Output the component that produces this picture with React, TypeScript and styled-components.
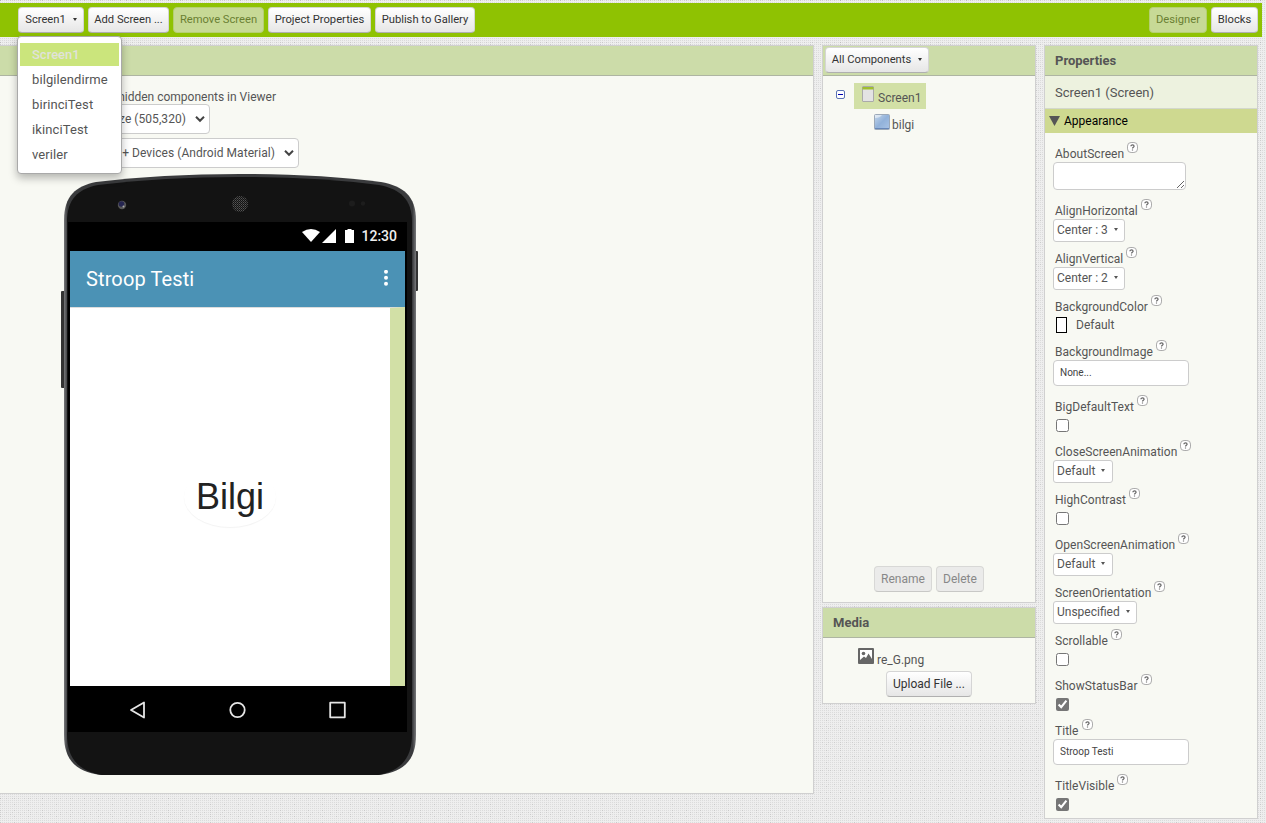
import React from 'react';
import styled, { createGlobalStyle, css } from 'styled-components';

const GlobalStyle = createGlobalStyle`
  * { box-sizing: border-box; }
  body {
    margin: 0;
    font-family: Roboto, "Liberation Sans", sans-serif;
    font-size: 12px;
    color: #555;
    overflow: hidden;
  }
`;

const dot = (alpha: number) =>
  `conic-gradient(from 270deg at 1px 1px, rgba(90, 90, 90, ${alpha}) 90deg, transparent 0)`;

const Page = styled.div`
  width: 1266px;
  height: 823px;
  padding-top: 3px;
  overflow: hidden;
  background-color: #eeeeee;
  background-image: ${dot(0.12)}, ${dot(0.14)}, ${dot(0.12)}, ${dot(0.1)};
  background-size: 2px 2px, 14px 6px, 10px 22px, 6px 14px;
`;

const Toolbar = styled.header`
  display: flex;
  gap: 4px;
  width: 1262px;
  height: 34px;
  padding: 4px 4px 0 18px;
  background: #8fc202;
`;

const Spacer = styled.div`
  flex: 1;
`;

const Button = styled.button<{ $w: number; $state?: 'current' | 'disabled'; $compact?: boolean }>`
  display: flex;
  align-items: center;
  justify-content: center;
  flex: none;
  width: ${p => p.$w}px;
  height: 26px;
  padding: 0 0 ${p => (p.$compact ? 2 : 1)}px;
  border: 1px solid #d5d5d5;
  border-bottom-color: #b0b0b0;
  border-radius: 4px;
  background: linear-gradient(#fff, #e6e6e6);
  color: #333;
  font: ${p => (p.$compact ? 11.2 : 12)}px Roboto, sans-serif;
  white-space: nowrap;
  ${p => p.$state === 'current' && css`
    border-color: #b5cf72;
    background: #c7d996;
    color: #6a7f33;
  `}
  ${p => p.$state === 'disabled' && css`
    border-color: #d8d8d6;
    border-bottom-color: #c8c8c6;
    background: #ebebea;
    color: #888;
  `}
`;

const Caret = styled.span<{ $size?: number; $gap?: number }>`
  margin-left: ${p => p.$gap ?? 7}px;
  border: ${p => p.$size ?? 2}px solid transparent;
  border-top: ${p => (p.$size ?? 2) + 1}px solid currentColor;
  border-bottom: 0;
`;

const MenuAnchor = styled.div`
  position: relative;
`;

const Menu = styled.div`
  position: absolute;
  z-index: 5;
  top: 29px;
  left: -1px;
  width: 105px;
  height: 138px;
  padding: 6px 2px;
  border: 1px solid #a9a9a9;
  border-radius: 4px;
  background: #fff;
  box-shadow: 0 4px 9px rgba(0, 0, 0, 0.28);
`;

const MenuItem = styled.div<{ $selected?: boolean }>`
  height: 23px;
  margin-bottom: 2px;
  padding-left: 12px;
  font-size: 13px;
  line-height: 24px;
  letter-spacing: 0.1px;
  color: #555;
  ${p => p.$selected && css`
    background: #cbe57c;
    color: #e0e2da;
    font-weight: 500;
    letter-spacing: 0;
  `}
`;

const Columns = styled.main`
  display: flex;
  align-items: flex-start;
  gap: 8px;
  margin-top: 8px;
`;

const Column = styled.div`
  display: flex;
  flex-direction: column;
  gap: 4px;
`;

const Panel = styled.section<{ $w: number; $h: number; $flushLeft?: boolean }>`
  display: flex;
  flex-direction: column;
  width: ${p => p.$w}px;
  height: ${p => p.$h}px;
  border: 1px solid #d0d0d0;
  ${p => p.$flushLeft && 'border-left: 0;'}
  background: #f8f9f3;
`;

const PanelHead = styled.div`
  flex: none;
  display: flex;
  align-items: center;
  height: 30px;
  padding-left: 10px;
  border-bottom: 1px solid #aeb5a2;
  background: #ccdca9;
  color: #555;
  font-size: 13px;
  font-weight: 700;
`;

const ComponentsHead = styled(PanelHead)`
  padding: 0 0 1px 2px;
`;

const ViewerBody = styled.div`
  display: flex;
  flex-direction: column;
  padding: 14px 0 0 61px;
`;

const HiddenToggle = styled.div`
  width: 215px;
  height: 14px;
  line-height: 14px;
  text-align: right;
`;

const SizeSelect = styled.div<{ $w: number }>`
  display: flex;
  align-items: center;
  justify-content: flex-end;
  gap: 9px;
  width: ${p => p.$w}px;
  height: 30px;
  margin-left: 4px;
  margin-bottom: 4px;
  padding-right: 4px;
  border: 1px solid #ccc;
  border-radius: 4px;
  background: #fff;
  color: #555;
  letter-spacing: 0.06px;
  white-space: nowrap;
`;

const PhoneFrame = styled.div`
  position: relative;
  width: 358px;
  height: 602px;
  margin-top: 2px;
  padding: 48px 11px 0 7px;
`;

const PhoneArt = styled.svg`
  position: absolute;
  inset: 0;
`;

const Screen = styled.div`
  position: relative;
  width: 339px;
  height: 510px;
  padding: 0 2px;
  background: #000;
`;

const StatusBar = styled.div`
  display: flex;
  align-items: center;
  justify-content: flex-end;
  height: 29px;
  padding: 0 8px 1px 0;
  color: #eee;
  font-size: 14px;
  font-weight: 500;
`;

const TitleBar = styled.div`
  display: flex;
  align-items: center;
  justify-content: space-between;
  height: 56px;
  padding: 0 16px;
  background: #4b92b5;
  color: #fff;
  font-size: 20px;
  letter-spacing: 0.12px;
`;

const Canvas = styled.div`
  display: flex;
  align-items: center;
  justify-content: center;
  width: 335px;
  height: 379px;
  border-top: 1px solid #ddd;
  border-right: 15px solid #d2e0a6;
  background: #fff;
`;

const OvalButton = styled.div`
  width: 92px;
  height: 60px;
  border-radius: 50%;
  box-shadow: 0 1px 1px rgba(0, 0, 0, 0.05);
  color: #222;
  font: 36px/60px "Liberation Sans", sans-serif;
  text-align: center;
`;

const NavBar = styled.svg`
  display: block;
`;

const Tree = styled.div`
  flex: 1;
  padding: 7px 0 0 13px;
`;

const TreeRow = styled.div<{ $indent?: number }>`
  display: flex;
  align-items: center;
  height: 26px;
  padding-left: ${p => p.$indent ?? 0}px;
  font-size: 12px;
`;

const ToggleIcon = styled.svg`
  margin-bottom: 3px;
`;

const TreeNode = styled.div`
  display: flex;
  width: 72px;
  height: 26px;
  margin-left: 9px;
  padding: 3px 0 0 8px;
  gap: 4px;
  line-height: 24px;
  background: #d2e0a6;
`;

const TreeLabel = styled.span`
  padding-left: 2px;
  padding-top: 6px;
`;

const ButtonRow = styled.div`
  display: flex;
  gap: 4px;
  padding: 0 0 10px 51px;
`;

const MediaBody = styled.div`
  padding: 10px 0 0 35px;
`;

const FileRow = styled.div`
  display: flex;
  gap: 3px;
  height: 23px;
  line-height: 24px;
`;

const UploadRow = styled.div`
  padding-left: 28px;
`;

const SelectedName = styled.div`
  flex: none;
  height: 33px;
  padding-left: 10px;
  border-bottom: 1px solid #d3d8cb;
  background: #edf2df;
  font-size: 13px;
  line-height: 33px;
`;

const GroupHead = styled.div`
  flex: none;
  display: flex;
  align-items: center;
  gap: 4px;
  height: 24px;
  margin-bottom: 7px;
  padding-left: 4px;
  background: #ced990;
  color: #000;
`;

const Property = styled.div<{ $h: number }>`
  flex: none;
  height: ${p => p.$h}px;
  padding-left: 8px;
`;

const PropertyLabel = styled.div`
  display: flex;
  height: 22px;
  padding-left: 2px;
  line-height: 28px;
  letter-spacing: 0.04px;
`;

const HelpIcon = styled.svg`
  margin: 2px 0 0 3px;
`;

const Choice = styled.div<{ $w: number }>`
  display: flex;
  align-items: center;
  width: ${p => p.$w}px;
  height: 23px;
  padding: 0 0 2px 3px;
  border: 1px solid #ccc;
  border-radius: 3px;
  background: #fff;
  white-space: nowrap;
`;

const Field = styled.input`
  display: block;
  width: 136px;
  height: 26px;
  padding: 0 6px 1px;
  border: 1px solid #ccc;
  border-radius: 4px;
  background: #fff;
  color: #444;
  font: 10px Roboto, sans-serif;
`;

const Area = styled.textarea`
  display: block;
  width: 133px;
  height: 28px;
  border: 1px solid #ccc;
  border-radius: 4px;
  background: #fff;
`;

const Check = styled.input`
  display: block;
  width: 13px;
  height: 13px;
  margin: 4px 0 0 3px;
  accent-color: #767676;
`;

const ColorRow = styled.div`
  display: flex;
  align-items: center;
  gap: 9px;
  padding: 2px 0 0 3px;
`;

const Swatch = styled.span`
  width: 11px;
  height: 16px;
  border: 1px solid #000;
  background: #fff;
`;

type Prop = { name: string; kind: 'area' | 'choice' | 'color' | 'text' | 'check'; value?: string; w?: number; on?: boolean };

const PROPS: Prop[] = [
  { name: 'AboutScreen', kind: 'area' },
  { name: 'AlignHorizontal', kind: 'choice', value: 'Center : 3', w: 72 },
  { name: 'AlignVertical', kind: 'choice', value: 'Center : 2', w: 72 },
  { name: 'BackgroundColor', kind: 'color', value: 'Default' },
  { name: 'BackgroundImage', kind: 'text', value: 'None...' },
  { name: 'BigDefaultText', kind: 'check' },
  { name: 'CloseScreenAnimation', kind: 'choice', value: 'Default', w: 60 },
  { name: 'HighContrast', kind: 'check' },
  { name: 'OpenScreenAnimation', kind: 'choice', value: 'Default', w: 60 },
  { name: 'ScreenOrientation', kind: 'choice', value: 'Unspecified', w: 84 },
  { name: 'Scrollable', kind: 'check' },
  { name: 'ShowStatusBar', kind: 'check', on: true },
  { name: 'Title', kind: 'text', value: 'Stroop Testi' },
  { name: 'TitleVisible', kind: 'check', on: true },
];

const ROW_HEIGHT = { area: 57, choice: 48, color: 45, text: 55, check: 45 };

function Editor({ item }: { item: Prop }) {
  switch (item.kind) {
    case 'area':
      return <Area />;
    case 'choice':
      return <Choice $w={item.w ?? 72}>{item.value}<Caret $gap={6} $size={2.5} /></Choice>;
    case 'color':
      return <ColorRow><Swatch />{item.value}</ColorRow>;
    case 'text':
      return <Field defaultValue={item.value} />;
    default:
      return <Check type="checkbox" defaultChecked={item.on} />;
  }
}

const Help = () => (
  <HelpIcon width="11" height="11" viewBox="0 0 11 11" fill="none">
    <rect x="0.5" y="0.5" width="10" height="10" rx="3.6" fill="#fff" stroke="#aaa" />
    <path d="M3.900 4.200C3.900 2.300 7.100 2.300 7.100 4.200C7.100 5.300 5.500 5.300 5.500 6.500M5.500 7.400V8.500" stroke="#666" strokeWidth="1.200" />
  </HelpIcon>
);

const Chevron = () => (
  <svg width="10" height="8" viewBox="0 0 10 8" fill="none" stroke="#444" strokeWidth="2">
    <path d="M1 1.8 5 5.8 9 1.8" />
  </svg>
);

function Phone() {
  return (
    <PhoneFrame>
      <PhoneArt width="358" height="602" viewBox="0 0 358 602">
        <defs>
          <linearGradient id="edge" x1="0" x2="1">
            <stop offset="0" stopColor="#77787a" />
            <stop offset="0.01" stopColor="#3a3b3d" />
            <stop offset="0.99" stopColor="#3a3b3d" />
            <stop offset="1" stopColor="#77787a" />
          </linearGradient>
          <pattern id="grille" width="2" height="2" patternUnits="userSpaceOnUse">
            <rect width="1" height="1" fill="#555" />
            <rect x="1" y="1" width="1" height="1" fill="#3c3c3c" />
          </pattern>
        </defs>
        <rect x="0" y="117" width="4" height="97" rx="1" fill="#333" />
        <rect x="353" y="77" width="4" height="40" rx="1" fill="#333" />
        <path d="M3 46C3 22 15 12 35 8Q100 0 179 0T320 8C342 12 355 22 355 46V561C355 585 344 598 318 601H40C14 598 3 585 3 561Z" fill="url(#edge)" />
        <path d="M6 48C6 25 17 15 37 11Q102 3 179 3T318 11C339 15 351 25 351 48V560C351 584 340 597 317 601H41C17 597 6 584 6 560Z" fill="#131313" />
        <circle cx="61" cy="31" r="4.200" fill="#555" />
        <circle cx="60.500" cy="30" r="2.800" fill="#252550" />
        <circle cx="62.500" cy="32.500" r="1" fill="#aaa" />
        <circle cx="179" cy="30" r="8" fill="url(#grille)" />
        <circle cx="291" cy="29.500" r="3" fill="#1d1d1d" />
        <circle cx="302" cy="29.500" r="2.200" fill="#1d1d1d" />
      </PhoneArt>
      <Screen>
        <StatusBar>
          <svg width="59" height="16" viewBox="0 0 59 16" fill="#fff">
            <path d="M0 4Q9-2 18 4L9 14Z" />
            <path d="M20 15 34 1V15Z" />
            <path d="M43 2h2.500V1h4v1H52v13H43Z" />
          </svg>
          12:30
        </StatusBar>
        <TitleBar>
          <span>Stroop Testi</span>
          <svg width="6" height="18" viewBox="0 0 6 18" fill="#fff">
            <circle cx="3" cy="1.800" r="2" /><circle cx="3" cy="7.800" r="2" /><circle cx="3" cy="13.800" r="2" />
          </svg>
        </TitleBar>
        <Canvas><OvalButton>Bilgi</OvalButton></Canvas>
        <NavBar width="335" height="46" viewBox="0 0 335 46" fill="none" stroke="#e5e5e5" strokeWidth="1.800" strokeLinejoin="round">
          <path d="M61 24 74 16.500V31.500Z" />
          <circle cx="167.500" cy="24" r="7.200" />
          <rect x="260.200" y="16.700" width="14.600" height="14.600" />
        </NavBar>
      </Screen>
    </PhoneFrame>
  );
}

export default function App() {
  return (
    <>
      <GlobalStyle />
      <Page>
        <Toolbar>
          <MenuAnchor>
            <Button $compact $w={66}>Screen1<Caret /></Button>
            <Menu>
              <MenuItem $selected>Screen1</MenuItem>
              {['bilgilendirme', 'birinciTest', 'ikinciTest', 'veriler'].map(name => (
                <MenuItem key={name}>{name}</MenuItem>
              ))}
            </Menu>
          </MenuAnchor>
          <Button $compact $w={81}>Add Screen ...</Button>
          <Button $compact $w={91} $state="current">Remove Screen</Button>
          <Button $compact $w={103}>Project Properties</Button>
          <Button $compact $w={100}>Publish to Gallery</Button>
          <Spacer />
          <Button $compact $w={58} $state="current">Designer</Button>
          <Button $compact $w={47}>Blocks</Button>
        </Toolbar>
        <Columns>
          <Panel $w={814} $h={749} $flushLeft>
            <PanelHead />
            <ViewerBody>
              <HiddenToggle>Display hidden components in Viewer</HiddenToggle>
              <SizeSelect $w={145}>Phone size (505,320)<Chevron /></SizeSelect>
              <SizeSelect $w={234}>Android 5+ Devices (Android Material)<Chevron /></SizeSelect>
              <Phone />
            </ViewerBody>
          </Panel>
          <Column>
            <Panel $w={214} $h={558}>
              <ComponentsHead><Button $compact $w={104}>All Components<Caret /></Button></ComponentsHead>
              <Tree>
                <TreeRow>
                  <ToggleIcon width="9" height="9" viewBox="0 0 9 9">
                    <rect x="0.500" y="0.500" width="8" height="8" rx="1.500" fill="#fff" stroke="#5b74b5" />
                    <path d="M2 4.500H7" stroke="#0000b0" />
                  </ToggleIcon>
                  <TreeNode>
                    <svg width="12" height="16" viewBox="0 0 12 16">
                      <rect x="0.500" y="0.500" width="11" height="15" rx="0.500" fill="#e3e3e3" stroke="#aaa" />
                      <path d="M0.500 1H11.500V3.500H0.500Z" fill="#9fbf2e" />
                    </svg>
                    <span>Screen1</span>
                  </TreeNode>
                </TreeRow>
                <TreeRow $indent={38}>
                  <svg width="16" height="16" viewBox="0 0 16 16">
                    <defs>
                      <linearGradient id="glass" x1="0" y1="0" x2="1" y2="1">
                        <stop offset="0" stopColor="#c6d8ea" />
                        <stop offset="0.500" stopColor="#92b2da" />
                        <stop offset="1" stopColor="#a9c4e6" />
                      </linearGradient>
                    </defs>
                    <rect x="0.500" y="0.500" width="15" height="15" rx="1" fill="url(#glass)" stroke="#9ca9b8" />
                    <path d="M1 4V1H8Q6 4 1 4Z" fill="#fff" fillOpacity="0.5" />
                    <path d="M1 14.500H15" stroke="#6787b8" />
                  </svg>
                  <TreeLabel>bilgi</TreeLabel>
                </TreeRow>
              </Tree>
              <ButtonRow>
                <Button $w={58} $state="disabled">Rename</Button>
                <Button $w={48} $state="disabled">Delete</Button>
              </ButtonRow>
            </Panel>
            <Panel $w={214} $h={97}>
              <PanelHead>Media</PanelHead>
              <MediaBody>
                <FileRow>
                  <svg width="16" height="16" viewBox="0 0 16 16">
                    <rect width="16" height="16" rx="1" fill="#666" />
                    <path d="M2 2H14V11L10.500 5.500 8 10 6 8.500 2 12Z" fill="#fff" />
                    <circle cx="5.500" cy="5.500" r="1.800" fill="#666" />
                  </svg>
                  re_G.png
                </FileRow>
                <UploadRow><Button $w={86}>Upload File ...</Button></UploadRow>
              </MediaBody>
            </Panel>
          </Column>
          <Panel $w={214} $h={774}>
            <PanelHead>Properties</PanelHead>
            <SelectedName>Screen1 (Screen)</SelectedName>
            <GroupHead>
              <svg width="11" height="10" viewBox="0 0 11 10"><path d="M0 0H11L5.500 10Z" fill="#555" /></svg>
              Appearance
            </GroupHead>
            {PROPS.map(item => (
              <Property key={item.name} $h={ROW_HEIGHT[item.kind]}>
                <PropertyLabel>{item.name}<Help /></PropertyLabel>
                <Editor item={item} />
              </Property>
            ))}
          </Panel>
        </Columns>
      </Page>
    </>
  );
}
